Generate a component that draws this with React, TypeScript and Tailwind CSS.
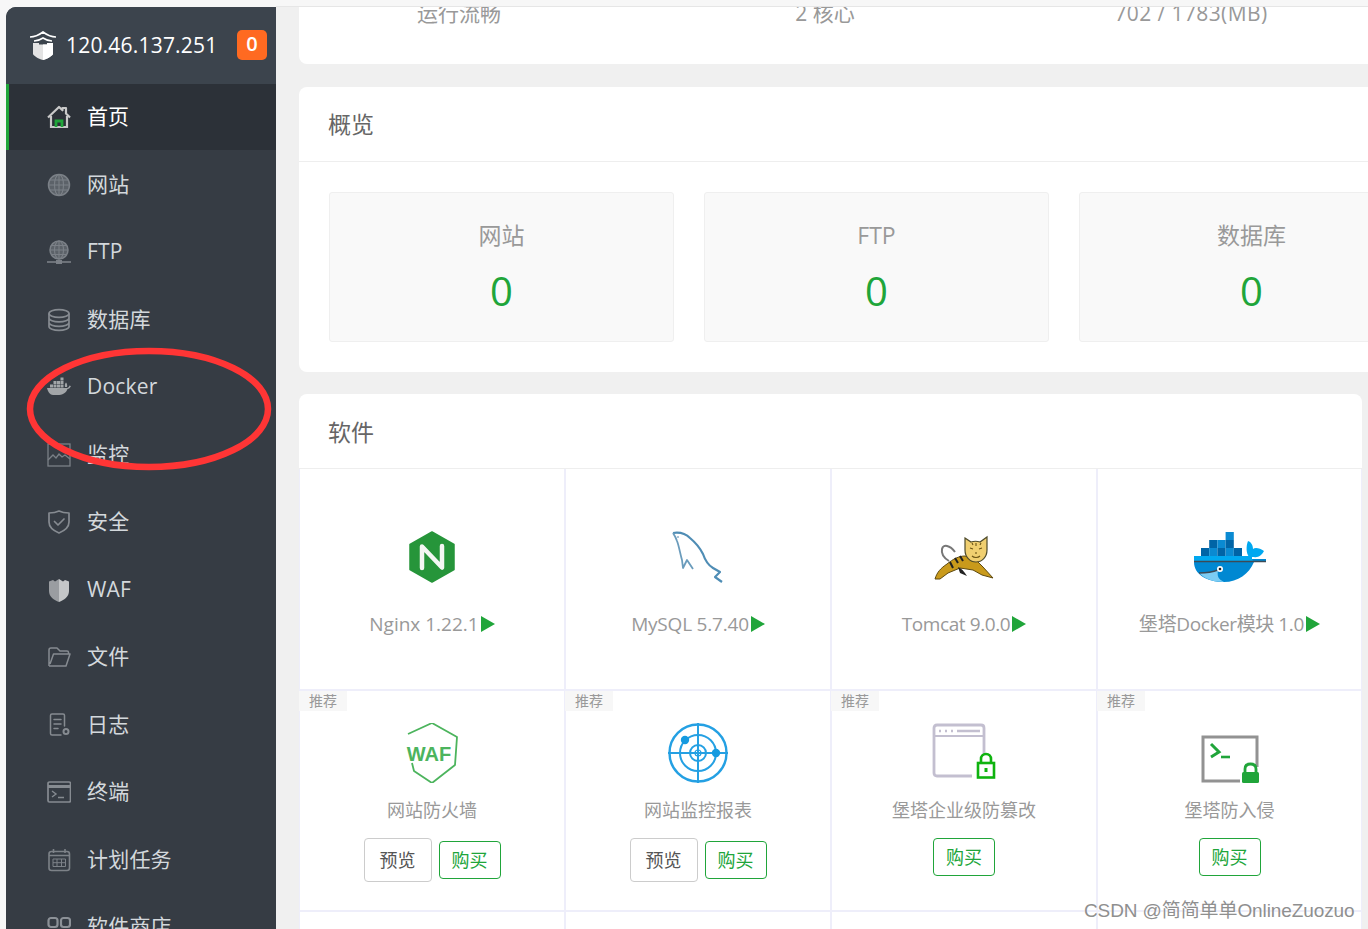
import React from 'react';

const g = '#7b8087';

const HomeIcon = () => (
  <svg width="24" height="24" viewBox="0 0 24 24" fill="none">
    <path d="M1 12.500 12 2l3.500 3.300V3h3.500v5.500l4 4" stroke="#c9c9c9" strokeWidth="2.200" strokeLinejoin="round" />
    <path d="M4 11v11h16V11" stroke="#c9c9c9" strokeWidth="2.200" />
    <path d="M9 22v-6h6v6" stroke="#20a53a" strokeWidth="2.800" />
  </svg>
);
const GlobeIcon = ({ small }: { small?: boolean }) => (
  <g stroke={g} strokeWidth="1.1" fill="none">
    <circle cx="12" cy={small ? 10 : 12} r={small ? 9 : 10.5} fill="#5c6269" strokeWidth="1.5" />
    <ellipse cx="12" cy={small ? 10 : 12} rx="4.5" ry={small ? 9 : 10.5} />
    <path d={small ? 'M12 1v18M3 10h18M4 5.5h16M4 14.5h16' : 'M12 1.5v21M1.5 12h21M3 7h18M3 17h18'} />
  </g>
);
const MenuIcon = ({ name }: { name: string }) => {
  if (name === 'home') return <HomeIcon />;
  return (
    <svg width="24" height="24" viewBox="0 0 24 24" fill="none">
      {name === 'globe' && <GlobeIcon />}
      {name === 'ftp' && (
        <>
          <GlobeIcon small />
          <path d="M0 22h24" stroke={g} strokeWidth="1.6" />
          <rect x="9" y="20" width="6" height="4" fill={g} />
        </>
      )}
      {name === 'db' && (
        <g stroke="#868b91" strokeWidth="1.7">
          <ellipse cx="12" cy="5.5" rx="10" ry="3.8" />
          <path d="M2 5.5v13c0 2.1 4.5 3.8 10 3.8s10-1.7 10-3.8v-13M2 10c0 2.1 4.5 3.8 10 3.8S22 12.100 22 10M2 14.500c0 2.100 4.500 3.800 10 3.800s10-1.700 10-3.800" />
        </g>
      )}
      {name === 'docker' && (
        <g fill="#a2a5a8">
          <path d="M0 13h20c1 0 2-1 2.500-2.500 1 .5 1.500.5 1.500.5-1 2-2 3-3.500 3-1.500 4-5 6-10 6H6c-3 0-5-3-6-7Z" />
          <rect x="3" y="9.500" width="3" height="3" />
          <rect x="6.500" y="9.500" width="3" height="3" />
          <rect x="10" y="9.500" width="3" height="3" />
          <rect x="13.500" y="9.500" width="3" height="3" />
          <rect x="6.500" y="6" width="3" height="3" />
          <rect x="10" y="6" width="3" height="3" />
          <rect x="13.500" y="6" width="3" height="3" />
          <rect x="13.500" y="2.500" width="3" height="3" />
          <path d="M18 12c-.5-2 0-3.500 1-4.500 1 1 1.500 2.500 1 4.500Z" />
        </g>
      )}
      {name === 'monitor' && (
        <g stroke={g} strokeWidth="1.3">
          <rect x="1" y="1" width="22" height="22" />
          <path d="m1 17 5-5 3 3 3-4 3 3 3-2 5 4" />
        </g>
      )}
      {name === 'shield' && (
        <g stroke="#868b91" strokeWidth="1.7" strokeLinejoin="round" strokeLinecap="round">
          <path d="M12 1c3 1.500 6 2 10 2v9c0 5-4 8.500-10 11C6 20.500 2 17 2 12V3c4 0 7-.5 10-2Z" />
          <path d="m7.500 11.500 3.500 3.500 6-6" />
        </g>
      )}
      {name === 'waf' && (
        <>
          <path d="M2 3.500 6 2l2 1.500L12 1v23c-5-2-10-5-10-11Z" fill="#9a9da1" />
          <path d="m12 1 4 2.500L18 2l4 1.500V13c0 6-5 9-10 11Z" fill="#c4c6c8" />
        </>
      )}
      {name === 'folder' && (
        <path d="M2 21V5c0-1 .5-2 2-2h6l3 3h7c1 0 1.500.5 1.500 1.500V9M2 21h17l4-12H6.500L3 19" stroke="#868b91" strokeWidth="1.5" strokeLinejoin="round" />
      )}
      {name === 'log' && (
        <g stroke="#868b91" strokeWidth="1.500" strokeLinecap="round">
          <path d="M14 22H5c-1 0-1.500-.5-1.500-1.500v-18C3.500 1.500 4 1 5 1h11c1 0 1.500.5 1.500 1.500V13" />
          <path d="M7 6.500h7M7 11h7M7 15.500h4" />
          <circle cx="19" cy="18.500" r="2.500" strokeWidth="2" />
        </g>
      )}
      {name === 'terminal' && (
        <g stroke="#868b91">
          <rect x="1" y="2" width="22.500" height="20" rx="1.500" strokeWidth="1.700" />
          <path d="M1 6.500h22.500" strokeWidth="3" />
          <path d="m5 11 4 3-4 3M11 17.500h6" strokeWidth="1.400" />
        </g>
      )}
      {name === 'calendar' && (
        <g stroke="#7d8288" strokeWidth="1.600">
          <rect x="2" y="3.500" width="20.500" height="19" rx="2.500" />
          <path d="M6.500 1v4M18 1v4M2 7.500h20.500" />
          <path d="M6 11h12.500v7.500H6zM10 11v7.500M14.500 11v7.500M6 14.700h12.500" strokeWidth="1" />
        </g>
      )}
      {name === 'store' && (
        <g stroke="#8c9197" strokeWidth="2.200">
          <rect x="1.500" y="3" width="9" height="9" rx="2.500" />
          <rect x="14" y="3" width="9" height="9" rx="2.500" />
          <rect x="1.500" y="15" width="9" height="9" rx="2.500" />
          <rect x="14" y="15" width="9" height="9" rx="2.500" />
        </g>
      )}
    </svg>
  );
};

const Logo = () => (
  <svg width="28" height="30" viewBox="0 0 28 30" fill="none">
    <path d="M1 6c5 0 9-2 13-5 4 3 8 5 13 5" stroke="#fff" strokeWidth="1.600" />
    <path d="M5 10c4 0 6-1 9-3 3 2 5 3 9 3" stroke="#fff" strokeWidth="1.600" />
    <path d="M4 12h6v1.500h8V12h6v11c0 1-5 5-10 6C9 28 4 24 4 23Z" fill="#e3e3e3" />
    <path d="M14 13.500h4V12h6v11c0 1-5 5-10 6Z" fill="#fff" />
  </svg>
);

const NginxLogo = () => (
  <svg width="60" height="60" viewBox="0 0 60 60" fill="none">
    <path d="M30 5 52 17.500v25L30 55 8 42.500v-25Z" fill="#26953a" stroke="#26953a" strokeWidth="1.500" strokeLinejoin="round" />
    <path d="M20 41V19.500L40 40.500V19" stroke="#f3f7f3" strokeWidth="4.500" strokeLinejoin="round" strokeLinecap="round" />
  </svg>
);

const MysqlLogo = () => (
  <svg width="60" height="60" viewBox="0 0 60 60" fill="none">
    <path d="M5 6C12 5 18 7 22 11c6 5 10 10 13 16 2 6 5 11 10 14l7 4-5 5 7 5" stroke="#4f8db5" strokeWidth="2.200" strokeLinejoin="round" />
    <path d="M5 6c2 3 3 5 4 8 2 5 3 12 5 19l1 8 4-8 6 9" stroke="#6b9cbc" strokeWidth="1.800" strokeLinejoin="round" />
    <circle cx="10" cy="10" r="1" fill="#8fb0c8" />
  </svg>
);

const TomcatLogo = () => (
  <svg width="60" height="60" viewBox="0 0 60 60" fill="none">
    <path d="M21 25C16 18 9 17 8 22c-1 5 2 9 7 12" stroke="#777" strokeWidth="2" />
    <path d="M1 52c2-7 6-11 12-15 6-5 12-8 18-8l10 3 8 8 10 11-11-3-9-5-13-2-12 5-8 6Z" fill="#c99a1b" stroke="#5e4a10" strokeWidth="1" />
    <path d="M21 31l3 5M26 29l3 5M16 35l3 6" stroke="#222" strokeWidth="2" />
    <path d="M24 40c3 1 6 4 9 9l-7-3Z" fill="#222" />
    <path d="M31 11l6 4c3-1 6-1 9 0l7-5v13c0 7-5 12-11 12-6 0-11-5-11-12Z" fill="#f0cf70" stroke="#4e4a2a" strokeWidth="1.200" />
    <path d="M36 21l3 1M45 22l3-1M42 25v2M38 29c2 2 6 2 8 0M42 16v3M38 16l1 2M47 16l-1 2" stroke="#6b5414" strokeWidth="1.100" />
  </svg>
);

const DockerLogo = () => {
  const dark = '#0064a6';
  const light = '#0a8ad2';
  const box = (x: number, y: number, c: string) => <rect key={`${x}-${y}`} x={7 + x * 8.2} y={y} width="8.200" height="8" fill={c} />;
  return (
    <svg width="72" height="50" viewBox="0 0 72 50" fill="none">
      {[box(0, 16, dark), box(1, 16, light), box(2, 16, dark), box(3, 16, light), box(4, 16, dark)]}
      {[box(1, 8, dark), box(2, 8, light), box(3, 8, dark), box(3, 0, light)]}
      <path d="M55 25c-3-4-3-11-1-16 3 1 5 4 5 8 2-2 7-1 11 2-2 4-6 7-10 6Z" fill="#00a8f0" />
      <path d="M0 24h58v3H72v3H60C55 42 44 50 30 50 12 50 0 42 0 30Z" fill="#0088d2" />
      <path d="M0 24h58v3l2 3H0Z" fill="#00a8f0" />
      <path d="M0 29.500h72" stroke="#3d4a55" strokeWidth="1.500" />
      <path d="M5 41c8 0 14-1 19-3-1 6 0 9 6 12-11 0-19-3-25-9Z" fill="#7ccdf4" />
      <path d="M5 41c8 0 14-1 19-3" stroke="#3d4a55" strokeWidth="1.500" />
      <circle cx="26" cy="37" r="3" fill="#fff" />
      <circle cx="26" cy="37" r="1.300" fill="#222" />
    </svg>
  );
};

const WafLogo = () => (
  <svg width="60" height="60" viewBox="0 0 60 60" fill="none">
    <path d="M6 11 30 0l25 14-2 28-23 18-18-12-2-8" stroke="#4cb45d" strokeWidth="1.800" strokeLinejoin="round" />
    <text x="27" y="38" textAnchor="middle" fontFamily="'Liberation Sans', sans-serif" fontSize="20" fontWeight="700" fill="#4cb45d">
      WAF
    </text>
  </svg>
);

const RadarLogo = () => (
  <svg width="60" height="60" viewBox="0 0 60 60" fill="none" stroke="#24a0e3">
    <circle cx="30" cy="30" r="28.500" strokeWidth="2.400" />
    <circle cx="30" cy="30" r="18" strokeWidth="2" />
    <circle cx="30" cy="30" r="8" strokeWidth="2" />
    <circle cx="30" cy="30" r="3" strokeWidth="1.200" />
    <path d="M30 0v60M0 30h60" strokeWidth="2" />
    <circle cx="17" cy="17" r="4.200" fill="#159ae0" stroke="none" />
    <circle cx="48" cy="30" r="4.200" fill="#159ae0" stroke="none" />
  </svg>
);

const TamperLogo = () => (
  <svg width="64" height="60" viewBox="0 0 64 60" fill="none">
    <path d="M40 53H5c-2 0-3-1-3-3V5c0-2 1-3 3-3h44c2 0 3 1 3 3v26" stroke="#c3bfd0" strokeWidth="2.800" />
    <path d="M2 13h50" stroke="#c3bfd0" strokeWidth="2" />
    <path d="M7 8h2M13 8h2M19 8h2M25 8h23" stroke="#c3bfd0" strokeWidth="2.600" />
    <rect x="46" y="40" width="16" height="14.500" stroke="#0fb30f" strokeWidth="2.600" />
    <path d="M49 40v-4c0-3 2-5 5-5s5 2 5 5v4" stroke="#0fb30f" strokeWidth="2.600" />
    <path d="M54 45v4" stroke="#0fb30f" strokeWidth="3" />
  </svg>
);

const IntrusionLogo = () => (
  <svg width="60" height="62" viewBox="0 0 60 62" fill="none">
    <path d="M40 59H3V15h54v30" stroke="#929292" strokeWidth="3" />
    <path d="m11 22 8 8-8 5" stroke="#20a53a" strokeWidth="3" />
    <path d="M21 35h9" stroke="#20a53a" strokeWidth="2.600" />
    <rect x="42" y="50" width="17" height="11" rx="1.500" fill="#20a53a" />
    <path d="M45 51v-4c0-3 2-5 5.500-5s5.500 2 5.500 5v4" stroke="#20a53a" strokeWidth="2.800" />
  </svg>
);

const menu = [
  ['home', '首页'],
  ['globe', '网站'],
  ['ftp', 'FTP'],
  ['db', '数据库'],
  ['docker', 'Docker'],
  ['monitor', '监控'],
  ['shield', '安全'],
  ['waf', 'WAF'],
  ['folder', '文件'],
  ['log', '日志'],
  ['terminal', '终端'],
  ['calendar', '计划任务'],
  ['store', '软件商店'],
];

const Sidebar = () => (
  <aside className="w-[270px] shrink-0 mt-[1px] bg-[#363c44] rounded-tl-[10px] overflow-hidden">
    <div className="h-[77px] bg-[#3c444d] flex items-center pl-[23px]">
      <Logo />
      <span className="ml-[9px] text-[21px] tracking-[0.2px] text-white">120.46.137.251</span>
      <span className="ml-auto mr-[9px] -mt-[1px] w-[30px] h-[30px] rounded-[5px] bg-[#ff6a21] text-white text-[20px] leading-[28px] font-semibold text-center">0</span>
    </div>
    <nav className="flex flex-col gap-[1.5px]">
      {menu.map(([icon, label], i) => (
        <div
          key={label}
          className={
            i === 0
              ? 'h-[66px] shrink-0 flex items-center gap-[16px] pl-[38px] border-l-[3px] border-[#20a53a] bg-[#2c3138] text-white text-[21px]'
              : 'h-[66px] shrink-0 flex items-center gap-[16px] pl-[41px] text-[#d3d8dc] text-[21px] tracking-[0.2px]'
          }
        >
          <span className="w-[24px] h-[24px] flex"><MenuIcon name={icon} /></span>
          <span>{label}</span>
        </div>
      ))}
    </nav>
  </aside>
);

const StatBox = ({ title }: { title: string }) => (
  <div className="w-[345px] h-[150px] shrink-0 bg-[#f9f9f9] border border-[#efefef] rounded-[3px] flex flex-col items-center pt-[25px]">
    <div className="text-[23px] leading-[34px] text-[#999]">{title}</div>
    <div className="mt-[13px] text-[40px] leading-[52px] text-[#20a53a]">0</div>
  </div>
);

const SoftCell = ({ logo, text, track }: { logo: React.ReactNode; text: string; track: string }) => (
  <div className="h-[222px] border-x border-b-2 border-[#eeeefa] flex flex-col items-center pt-[58px]">
    <div className="h-[60px] flex items-center justify-center">{logo}</div>
    <div className={`mt-[23px] h-[28px] flex items-center text-[19px] text-[#999] ${track}`}>
      <span>{text}</span>
      <span className="ml-[2px] w-0 h-0 border-y-[8px] border-y-transparent border-l-[14px] border-l-[#20a53a]" />
    </div>
  </div>
);

const RecommendCell = ({ logo, text, preview }: { logo: React.ReactNode; text: string; preview?: boolean }) => (
  <div className="relative h-[221px] border-x border-b-2 border-[#eeeefa] flex flex-col items-center pt-[32px]">
    <span className="absolute -left-px top-0 w-[48px] h-[20px] bg-[#f7f7f7] text-[14px] leading-[20px] text-[#999] text-center">推荐</span>
    <div className="h-[60px] flex items-center justify-center">{logo}</div>
    <div className="mt-[13px] h-[28px] leading-[28px] text-[18px] text-[#999]">{text}</div>
    <div className="mt-[14px] flex items-center gap-[7px]">
      {preview && (
        <button className="w-[68px] h-[44px] rounded-[4px] border border-[#ccc] bg-white text-[18px] text-[#555]">预览</button>
      )}
      <button className="w-[62px] h-[38px] rounded-[4px] border border-[#20a53a] bg-white text-[18px] text-[#20a53a]">购买</button>
    </div>
  </div>
);

export default function App() {
  return (
    <div
      className="relative w-[1368px] h-[929px] overflow-hidden bg-[#f7f7f7] pt-[6px] pl-[6px] flex"
      style={{ fontFamily: "'Open Sans', 'Noto Sans CJK SC', sans-serif" }}
    >
      <Sidebar />

      <main className="flex-1 min-w-0 overflow-hidden bg-[#f0f0f0] border-t border-[#e6e6e6] pl-[23px]">
        <section className="w-[1125px] h-[57px] bg-white rounded-b-[8px] overflow-hidden text-[21px] text-[#999]">
          <div className="-ml-[23px] -mt-[10px] w-[1098px] grid grid-cols-3 leading-[32px] text-center">
            <div>运行流畅</div>
            <div>2 核心</div>
            <div className="tracking-[0.4px]">702 / 1783(MB)</div>
          </div>
        </section>

        <section className="w-[1125px] h-[285px] mt-[23px] bg-white rounded-[8px]">
          <div className="h-[75px] border-b border-[#eeeeee] flex items-center pl-[29px] text-[23px] text-[#666]">概览</div>
          <div className="flex gap-[30px] pt-[30px] pl-[30px]">
            <StatBox title="网站" />
            <StatBox title="FTP" />
            <StatBox title="数据库" />
          </div>
        </section>

        <section className="w-[1063px] mt-[22px] bg-white rounded-t-[8px]">
          <div className="h-[75px] border-b border-[#eeeeee] flex items-center pl-[29px] pt-[2px] text-[23px] text-[#666]">软件</div>
          <div className="grid grid-cols-[266px_266px_266px_265px]">
            <SoftCell logo={<NginxLogo />} text="Nginx 1.22.1" track="" />
            <SoftCell logo={<MysqlLogo />} text="MySQL 5.7.40" track="tracking-[-0.2px]" />
            <SoftCell logo={<TomcatLogo />} text="Tomcat 9.0.0" track="tracking-[-0.4px]" />
            <SoftCell logo={<DockerLogo />} text="堡塔Docker模块 1.0" track="tracking-[-0.4px]" />
            <RecommendCell logo={<WafLogo />} text="网站防火墙" preview />
            <RecommendCell logo={<RadarLogo />} text="网站监控报表" preview />
            <RecommendCell logo={<TamperLogo />} text="堡塔企业级防篡改" />
            <RecommendCell logo={<IntrusionLogo />} text="堡塔防入侵" />
            <div className="h-[40px] border-x border-[#eeeefa]" />
            <div className="h-[40px] border-x border-[#eeeefa]" />
            <div className="h-[40px] border-x border-[#eeeefa]" />
            <div className="h-[40px] border-x border-[#eeeefa]" />
          </div>
        </section>
      </main>

      {/* annotation drawn over the screenshot */}
      <svg className="absolute left-[19px] top-[339px]" width="260" height="140" viewBox="0 0 260 140" fill="none">
        <ellipse cx="130" cy="70" rx="119" ry="58" stroke="#ff3535" strokeWidth="6.500" />
      </svg>
      <div
        className="absolute left-[1084px] top-[897px] text-[19px] leading-[28px] tracking-[-0.1px] text-[#8f8f8f] whitespace-nowrap"
        style={{ fontFamily: "'Liberation Sans', 'Noto Sans CJK SC', sans-serif", textShadow: '0 0 2px #fff' }}
      >
        CSDN @简简单单OnlineZuozuo
      </div>
    </div>
  );
}
